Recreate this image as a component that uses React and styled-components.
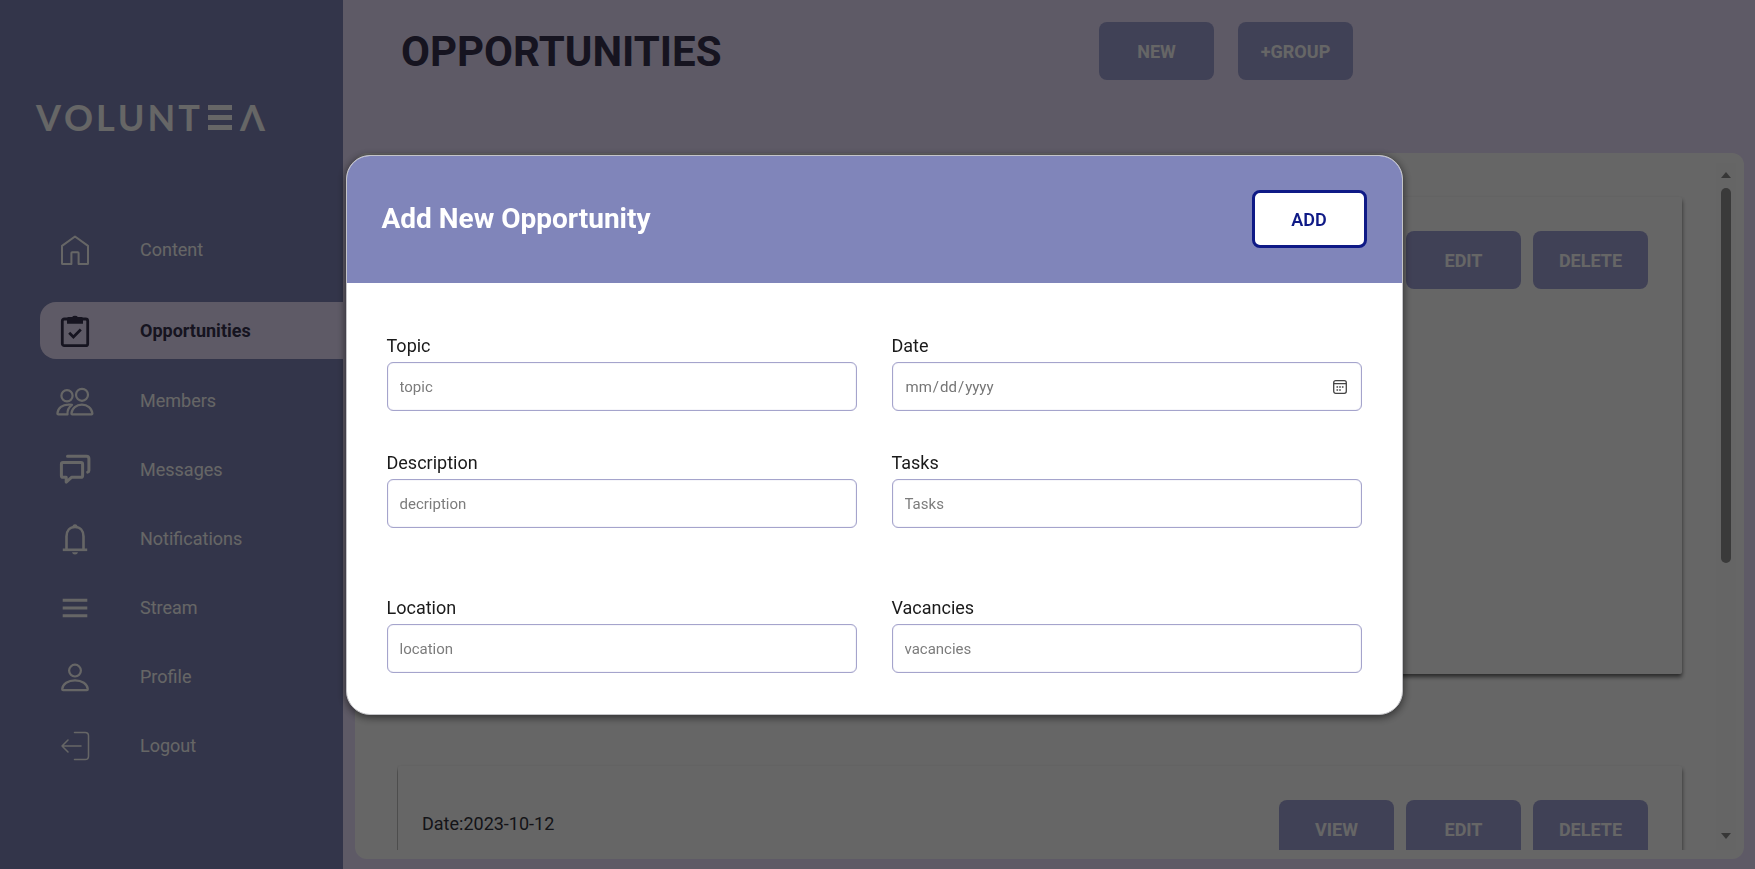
import React from "react";
import styled, { createGlobalStyle, css } from "styled-components";

const color = {
  sidebar: "#8085b8",
  modalHeader: "#8085ba",
  lilac: "#ebe1ff",
  button: "#a0a2d7",
  ink: "#373450",
  navy: "#0f1a86",
  line: "#a5a4cc",
};

const GlobalStyle = createGlobalStyle`
  *, *::before, *::after { box-sizing: border-box; }
  body { margin: 0; font-family: Roboto, "Liberation Sans", sans-serif; font-size: 18px; }
  button, input { font-family: inherit; }
  h1, h2, p, ul { margin: 0; padding: 0; }
`;

const Page = styled.div`
  display: flex;
  height: 100vh;
  min-height: 800px;
  overflow: hidden;
  background: ${color.lilac};
`;

const Sidebar = styled.aside`
  flex: 0 0 343px;
  padding-top: 95px;
  background: ${color.sidebar};
  color: #fff;
`;

const Logo = styled.div`
  display: flex;
  align-items: center;
  gap: 3px;
  height: 44px;
  margin-bottom: 82px;
  padding-left: 36px;
  font-family: Lato, sans-serif;
  font-size: 36px;
  font-weight: 700;
  line-height: 44px;
`;

const LogoBars = styled.span`
  display: flex;
  flex-direction: column;
  justify-content: space-between;
  width: 24px;
  height: 25px;
  margin: 0 5px;

  i {
    height: 5px;
    background: currentColor;
  }
`;

const NavList = styled.ul`
  display: flex;
  flex-direction: column;
  gap: 12px;
  list-style: none;
`;

const NavItem = styled.li`
  ${(p) => p.$active && css`margin: 12px 0 1px;`}
`;

const NavLink = styled.a`
  display: flex;
  align-items: center;
  gap: 45px;
  height: 57px;
  margin-left: 40px;
  padding-left: 15px;
  border-radius: 16px 0 0 16px;
  color: ${(p) => (p.$active ? color.ink : "#fff")};
  background: ${(p) => (p.$active ? color.lilac : "transparent")};
  font-weight: ${(p) => (p.$active ? 700 : 400)};
  text-decoration: none;
`;

const IconSvg = styled.svg`
  flex: none;
  width: 40px;
  height: 40px;
  fill: none;
  stroke: currentColor;
  stroke-linejoin: round;
  overflow: visible;
`;

const Main = styled.main`
  display: flex;
  flex: 1;
  flex-direction: column;
  min-width: 0;
`;

const PageHeader = styled.header`
  display: flex;
  flex: 0 0 153px;
  align-items: flex-start;
  justify-content: space-between;
  max-width: 1010px;
  padding: 22px 0 0 58px;
`;

const PageTitle = styled.h1`
  color: ${color.ink};
  font-size: 42px;
  font-weight: 700;
  line-height: 60px;
`;

const ButtonRow = styled.div`
  display: flex;
  gap: ${(p) => (p.$wide ? 24 : 12)}px;
`;

const Button = styled.button`
  width: 115px;
  height: 58px;
  padding: 0;
  border: 0;
  border-radius: 8px;
  background: ${color.button};
  color: #fff;
  font-size: 18px;
  font-weight: 700;
`;

const AddButton = styled(Button)`
  border: 3px solid ${color.navy};
  background: #fff;
  color: ${color.navy};
  font-weight: 600;
`;

const Panel = styled.section`
  display: flex;
  flex: 1;
  min-height: 0;
  margin: 0 11px 10px 12px;
  padding: 10px 8px 9px 42px;
  border-radius: 12px;
  background: #fff;
`;

const CardList = styled.div`
  display: flex;
  flex: 1;
  flex-direction: column;
  gap: 92px;
  padding: 34px 34px 0 1px;
  overflow: hidden;
`;

const Card = styled.article`
  display: flex;
  flex: 0 0 477px;
  align-items: flex-start;
  justify-content: space-between;
  padding: 34px 34px 34px 24px;
  border-radius: 2px;
  background: #fff;
  box-shadow: 0 3px 4px rgba(0, 0, 0, 0.6);
`;

const CardDate = styled.p`
  padding-top: 12px;
  color: #34343c;
  line-height: 24px;
`;

const ScrollBar = styled.div`
  display: flex;
  flex: 0 0 20px;
  flex-direction: column;
  align-items: center;
  padding: 9px 0 11px;
  background: #fcfcfc;
`;

const Arrow = styled.span`
  border: 5px solid transparent;
  border-top-width: ${(p) => (p.$down ? 6 : 0)}px;
  border-bottom-width: ${(p) => (p.$down ? 0 : 6)}px;
  border-${(p) => (p.$down ? "top" : "bottom")}-color: #8b8b8b;
`;

const Track = styled.div`
  flex: 1;
  padding: 10px 0;
`;

const Thumb = styled.div`
  width: 10px;
  height: 59%;
  border-radius: 5px;
  background: #919191;
`;

const Overlay = styled.div`
  position: fixed;
  inset: 0;
  display: flex;
  align-items: center;
  justify-content: center;
  padding-right: 7px;
  background: rgba(0, 0, 0, 0.6);
`;

const Modal = styled.div`
  width: 100%;
  max-width: 1057px;
  overflow: hidden;
  border: 1px solid #c4c4c8;
  border-radius: 24px;
  background: #fff;
  box-shadow: 0 2px 10px rgba(0, 0, 0, 0.6);
`;

const ModalHeader = styled.div`
  display: flex;
  align-items: center;
  justify-content: space-between;
  height: 127px;
  padding: 0 35px;
  background: ${color.modalHeader};
`;

const ModalTitle = styled.h2`
  color: #fff;
  font-size: 28px;
  font-weight: 700;
  line-height: 36px;
`;

const Form = styled.form`
  display: flex;
  flex-direction: column;
  gap: 40px;
  padding: 51px 40px 41px;
`;

const FieldRow = styled.div`
  display: grid;
  grid-template-columns: 1fr 1fr;
  gap: 35px;

  &:last-child { padding-top: 28px; }
`;

const Field = styled.div`
  display: flex;
  flex-direction: column;
  gap: 4px;
  min-width: 0;
`;

const Label = styled.label`
  color: #1a1a1a;
  line-height: 24px;
`;

const calendar = encodeURIComponent(
  `<svg xmlns="http://www.w3.org/2000/svg" viewBox="0 0 14 14" fill="none" stroke="#444"><rect x=".7" y=".7" width="12.6" height="12.6" rx="2" stroke-width="1.3"/><path d="M1 3.7h12" stroke-width="1.2"/><path d="M3.5 7h1.6m1.1 0h1.6m1.1 0h1.6M3.5 10h1.6m1.1 0h1.6" stroke-width="1.6"/></svg>`
);

const Input = styled.input`
  width: 100%;
  height: 49px;
  padding: 2px 12px 0;
  border: 1px solid ${color.line};
  border-radius: 6px;
  background: #fff;
  box-shadow: inset 0 0 1px ${color.line};
  color: #757575;
  font-size: 15px;
  outline: none;

  &::placeholder { color: #7c7c7c; }

  &::-webkit-calendar-picker-indicator {
    width: 14px;
    height: 14px;
    margin: 0 2px 0 0;
    padding: 0;
    background: url("data:image/svg+xml,${calendar}") center / 14px 14px no-repeat;
  }
`;

const icons = {
  home: (
    <path strokeWidth="2" d="M7 33.4V15.9L20 6.5l13 9.4v17.5q0 .7-.7.7h-8.700V23q0-.8-.8-.8h-5.600q-.8 0-.8.8v11.100H7.700q-.7 0-.7-.7Z" />
  ),
  clipboard: (
    <g strokeWidth="2.8">
      <rect x="7.3" y="8" width="25.4" height="26.7" rx="2" />
      <path fill="currentColor" stroke="none" d="M13.5 6h3.7q.5-1.300 2.800-1.300T22.800 6h3.700q1.500 0 1.500 1.500v5.200H12V7.500Q12 6 13.500 6Z" />
      <path strokeLinejoin="miter" d="m14.200 21.800 4.200 4.200 7.400-7.400" />
    </g>
  ),
  members: (
    <g strokeWidth="2.2">
      <circle cx="27" cy="13.8" r="6" />
      <circle cx="12" cy="14.8" r="5.6" />
      <path d="M16.4 32.5c.5-5.300 5-8.800 10.500-8.800s10 3.500 10.500 8.800q0 .9-.9.900h-19.200q-.9 0-.9-.9Z" />
      <path d="M17 23.900c-1.300-.3-2.600-.4-3.700-.3-5.600 0-10.500 3.300-10.900 8.900q0 .9.900.9h9.200c-.3-3.700 1-7 4.500-9.500Z" />
    </g>
  ),
  messages: (
    <g strokeWidth="3">
      <path d="M8 12.600h18q1.600 0 1.600 1.600v11.500q0 1.600-1.600 1.600H16.500l-5.300 4.800v-4.800H8q-1.600 0-1.600-1.600V14.200q0-1.600 1.600-1.600Z" />
      <path strokeLinecap="round" d="M12.500 6.300H31.500q2.400 0 2.400 2.400V20.500q0 1.300-1.200 1.700" />
    </g>
  ),
  bell: (
    <g strokeWidth="2.6">
      <path d="M11.500 30.500V17.500c0-6 3.300-9.500 8.500-9.500s8.500 3.500 8.500 9.500v13" />
      <path d="M7.800 30.800h24.400" />
      <path fill="currentColor" stroke="none" d="M17.400 8.200a2.600 2.900 0 0 1 5.200 0ZM17 33.200h6q-.5 2.300-3 2.300t-3-2.300Z" />
    </g>
  ),
  stream: <path strokeWidth="3" d="M7.700 12.200h24.600M7.700 20h24.600M7.700 27.800h24.600" />,
  profile: (
    <g strokeWidth="2.2">
      <circle cx="20" cy="13.600" r="5.900" />
      <path d="M7.200 32.200c.4-5.400 6-8.800 12.800-8.800s12.400 3.400 12.800 8.800q0 .9-.9.900H8.100q-.9 0-.9-.9Z" />
    </g>
  ),
  logout: (
    <path strokeWidth="1.500" strokeLinecap="round" d="M19.500 6.400H30.200q3.300 0 3.300 3.300V30.300q0 3.300-3.300 3.300H19.500M26 20H7M13 14l-6 6 6 6" />
  ),
};

const Icon = ({ name }) => (
  <IconSvg viewBox="0 0 40 40" aria-hidden="true">
    {icons[name]}
  </IconSvg>
);

const navItems = [
  { label: "Content", icon: "home" },
  { label: "Opportunities", icon: "clipboard", active: true },
  { label: "Members", icon: "members" },
  { label: "Messages", icon: "messages" },
  { label: "Notifications", icon: "bell" },
  { label: "Stream", icon: "stream" },
  { label: "Profile", icon: "profile" },
  { label: "Logout", icon: "logout" },
];

const opportunities = [
  { id: 1, date: "", actions: ["EDIT", "DELETE"] },
  { id: 2, date: "Date:2023-10-12", actions: ["VIEW", "EDIT", "DELETE"] },
];

const fieldRows = [
  [
    { id: "topic", label: "Topic", placeholder: "topic" },
    { id: "date", label: "Date", type: "date" },
  ],
  [
    { id: "description", label: "Description", placeholder: "decription" },
    { id: "tasks", label: "Tasks", placeholder: "Tasks" },
  ],
  [
    { id: "location", label: "Location", placeholder: "location" },
    { id: "vacancies", label: "Vacancies", placeholder: "vacancies" },
  ],
];

export default function App() {
  return (
    <>
      <GlobalStyle />
      <Page>
        <Sidebar>
          <Logo>
            {[..."VOLUNT"].map((letter) => (
              <span key={letter}>{letter}</span>
            ))}
            <LogoBars>
              <i />
              <i />
              <i />
            </LogoBars>
            <span>Λ</span>
          </Logo>
          <nav>
            <NavList>
              {navItems.map((item) => (
                <NavItem key={item.label} $active={item.active}>
                  <NavLink href="#" $active={item.active}>
                    <Icon name={item.icon} />
                    {item.label}
                  </NavLink>
                </NavItem>
              ))}
            </NavList>
          </nav>
        </Sidebar>
        <Main>
          <PageHeader>
            <PageTitle>OPPORTUNITIES</PageTitle>
            <ButtonRow $wide>
              <Button type="button">NEW</Button>
              <Button type="button">+GROUP</Button>
            </ButtonRow>
          </PageHeader>
          <Panel>
            <CardList>
              {opportunities.map((item) => (
                <Card key={item.id}>
                  <CardDate>{item.date}</CardDate>
                  <ButtonRow>
                    {item.actions.map((action) => (
                      <Button type="button" key={action}>{action}</Button>
                    ))}
                  </ButtonRow>
                </Card>
              ))}
            </CardList>
            <ScrollBar aria-hidden="true">
              <Arrow />
              <Track>
                <Thumb />
              </Track>
              <Arrow $down />
            </ScrollBar>
          </Panel>
        </Main>
      </Page>
      <Overlay>
        <Modal role="dialog" aria-modal="true" aria-labelledby="modal-title">
          <ModalHeader>
            <ModalTitle id="modal-title">Add New Opportunity</ModalTitle>
            <AddButton type="submit" form="opportunity-form">ADD</AddButton>
          </ModalHeader>
          <Form id="opportunity-form">
            {fieldRows.map((row) => (
              <FieldRow key={row[0].id}>
                {row.map((field) => (
                  <Field key={field.id}>
                    <Label htmlFor={field.id}>{field.label}</Label>
                    <Input id={field.id} type={field.type || "text"} placeholder={field.placeholder} />
                  </Field>
                ))}
              </FieldRow>
            ))}
          </Form>
        </Modal>
      </Overlay>
    </>
  );
}
